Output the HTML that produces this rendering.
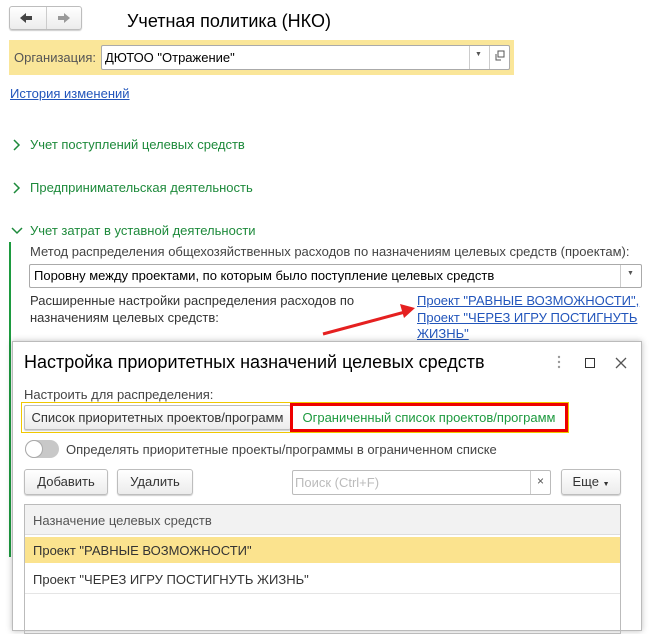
<!DOCTYPE html>
<html><head><meta charset="utf-8"><style>
*{box-sizing:border-box;margin:0;padding:0}
body{width:650px;height:620px;overflow:hidden;background:#fff;font-family:"Liberation Sans",Arial,sans-serif;font-size:13px;color:#333;position:relative}
.a{position:absolute;white-space:nowrap}
.btn{position:absolute;background:linear-gradient(#fff,#ececec);border:1px solid #bdbdbd;border-radius:3px;box-shadow:0 1px 1px rgba(0,0,0,.2);text-align:center;color:#333;white-space:nowrap}
.lnk{color:#2255bb;text-decoration:underline}
.sec{color:#1d8a3b;font-size:13px}
</style></head><body>
<div class="btn" style="left:9px;top:6px;width:73px;height:24px"></div>
<div class="a" style="left:46px;top:7px;width:1px;height:22px;background:#ccc"></div>
<svg class="a" style="left:19px;top:12px" width="14" height="12"><path d="M1 6 L7 1 L7 4 L13 4 L13 8 L7 8 L7 11 Z" fill="#444"/></svg>
<svg class="a" style="left:57px;top:12px" width="14" height="12"><path d="M13 6 L7 1 L7 4 L1 4 L1 8 L7 8 L7 11 Z" fill="#999"/></svg>
<div class="a" style="left:127px;top:11px;font-size:18px;color:#000">Учетная политика (НКО)</div>

<div class="a" style="left:9px;top:40px;width:505px;height:35px;background:#fae699"></div>
<div class="a" style="left:14px;top:50px;color:#555">Организация:</div>
<div class="a" style="left:101px;top:45px;width:409px;height:25px;background:#fff;border:1px solid #aaa;border-radius:2px"></div>
<div class="a" style="left:105px;top:50px;color:#000">ДЮТОО "Отражение"</div>
<div class="a" style="left:469px;top:46px;width:1px;height:23px;background:#ccc"></div>
<div class="a" style="left:489px;top:46px;width:1px;height:23px;background:#ccc"></div>
<div class="a" style="left:475px;top:51px;font-size:7px;color:#555">▼</div>
<svg class="a" style="left:494px;top:50px" width="12" height="12"><rect x="4" y="1" width="6" height="6" fill="none" stroke="#555"/><path d="M2 4 V10 H7" fill="none" stroke="#555"/></svg>

<div class="a lnk" style="left:10px;top:86px">История изменений</div>

<svg class="a" style="left:13px;top:139px" width="8" height="12"><path d="M1 1 L6 6 L1 11" fill="none" stroke="#1d8a3b" stroke-width="1.5"/></svg>
<div class="a sec" style="left:30px;top:137px">Учет поступлений целевых средств</div>
<svg class="a" style="left:13px;top:182px" width="8" height="12"><path d="M1 1 L6 6 L1 11" fill="none" stroke="#1d8a3b" stroke-width="1.5"/></svg>
<div class="a sec" style="left:30px;top:180px">Предпринимательская деятельность</div>
<svg class="a" style="left:11px;top:227px" width="12" height="8"><path d="M1 1 L6 6 L11 1" fill="none" stroke="#1d8a3b" stroke-width="1.5"/></svg>
<div class="a sec" style="left:30px;top:223px">Учет затрат в уставной деятельности</div>
<div class="a" style="left:9px;top:242px;width:2px;height:315px;background:#1d9a3f"></div>
<div class="a" style="left:30px;top:244px;color:#444">Метод распределения общехозяйственных расходов по назначениям целевых средств (проектам):</div>
<div class="a" style="left:29px;top:264px;width:613px;height:24px;border:1px solid #aaa;border-radius:2px;background:#fff"></div>
<div class="a" style="left:34px;top:268px;color:#000">Поровну между проектами, по которым было поступление целевых средств</div>
<div class="a" style="left:620px;top:265px;width:1px;height:22px;background:#ccc"></div>
<div class="a" style="left:627px;top:270px;font-size:7px;color:#555">▼</div>
<div class="a" style="left:30px;top:293px;color:#333">Расширенные настройки распределения расходов по</div>
<div class="a" style="left:30px;top:310px;color:#333">назначениям целевых средств:</div>
<div class="a lnk" style="left:417px;top:293px">Проект "РАВНЫЕ ВОЗМОЖНОСТИ",</div>
<div class="a lnk" style="left:417px;top:310px">Проект "ЧЕРЕЗ ИГРУ ПОСТИГНУТЬ</div>
<div class="a lnk" style="left:417px;top:326px">ЖИЗНЬ"</div>
<svg class="a" style="left:0;top:0" width="650" height="620"><line x1="323" y1="334" x2="405" y2="312" stroke="#e52020" stroke-width="3"/><path d="M415 308 L400 304 L404 318 Z" fill="#e52020"/></svg>

<div class="a" style="left:12px;top:341px;width:630px;height:290px;background:#fff;border:1px solid #bbb;box-shadow:0 0 6px rgba(0,0,0,.25)"></div>
<div class="a" style="left:24px;top:352px;font-size:18px;color:#000">Настройка приоритетных назначений целевых средств</div>
<svg class="a" style="left:557px;top:355px" width="4" height="14"><circle cx="2" cy="2" r="1.2" fill="#999"/><circle cx="2" cy="7" r="1.2" fill="#999"/><circle cx="2" cy="12" r="1.2" fill="#999"/></svg>
<div class="a" style="left:585px;top:358px;width:10px;height:10px;border:1.5px solid #333"></div>
<svg class="a" style="left:615px;top:357px" width="12" height="12"><path d="M1 1 L11 11 M11 1 L1 11" stroke="#555" stroke-width="1.3"/></svg>
<div class="a" style="left:24px;top:387px;color:#444">Настроить для распределения:</div>
<div class="a" style="left:21px;top:402px;width:548px;height:31px;border:1px solid #f0c800"></div>
<div class="btn" style="left:24px;top:405px;width:267px;height:25px;line-height:23px;border-radius:2px">Список приоритетных проектов/программ</div>
<div class="a" style="left:290px;top:403px;width:278px;height:29px;border:3px solid #e00;background:#fff;color:#1d9a3f;text-align:center;line-height:23px">Ограниченный список проектов/программ</div>
<div class="a" style="left:25px;top:440px;width:34px;height:18px;border-radius:9px;background:#c8c8c8"></div>
<div class="a" style="left:25px;top:440px;width:18px;height:18px;border-radius:9px;background:#fff;border:1px solid #aaa"></div>
<div class="a" style="left:66px;top:442px;color:#444">Определять приоритетные проекты/программы в ограниченном списке</div>
<div class="btn" style="left:24px;top:469px;width:84px;height:26px;line-height:24px">Добавить</div>
<div class="btn" style="left:117px;top:469px;width:76px;height:26px;line-height:24px">Удалить</div>
<div class="a" style="left:292px;top:470px;width:259px;height:25px;border:1px solid #bbb;border-radius:2px;background:#fff"></div>
<div class="a" style="left:295px;top:475px;color:#bbb">Поиск (Ctrl+F)</div>
<div class="a" style="left:530px;top:471px;width:1px;height:23px;background:#ccc"></div>
<div class="a" style="left:537px;top:474px;font-size:12px;color:#555">×</div>
<div class="btn" style="left:561px;top:469px;width:60px;height:26px;line-height:24px">Еще <span style="font-size:7px">▼</span></div>
<div class="a" style="left:24px;top:504px;width:597px;height:130px;border:1px solid #bbb"></div>
<div class="a" style="left:25px;top:505px;width:595px;height:30px;background:#f2f2f2;border-bottom:1px solid #ddd"></div>
<div class="a" style="left:33px;top:513px;color:#555">Назначение целевых средств</div>
<div class="a" style="left:25px;top:537px;width:595px;height:26px;background:#fbe38e"></div>
<div class="a" style="left:33px;top:543px;color:#333">Проект "РАВНЫЕ ВОЗМОЖНОСТИ"</div>
<div class="a" style="left:25px;top:593px;width:595px;height:1px;background:#e5e5e5"></div>
<div class="a" style="left:33px;top:572px;color:#333">Проект "ЧЕРЕЗ ИГРУ ПОСТИГНУТЬ ЖИЗНЬ"</div>
</body></html>
